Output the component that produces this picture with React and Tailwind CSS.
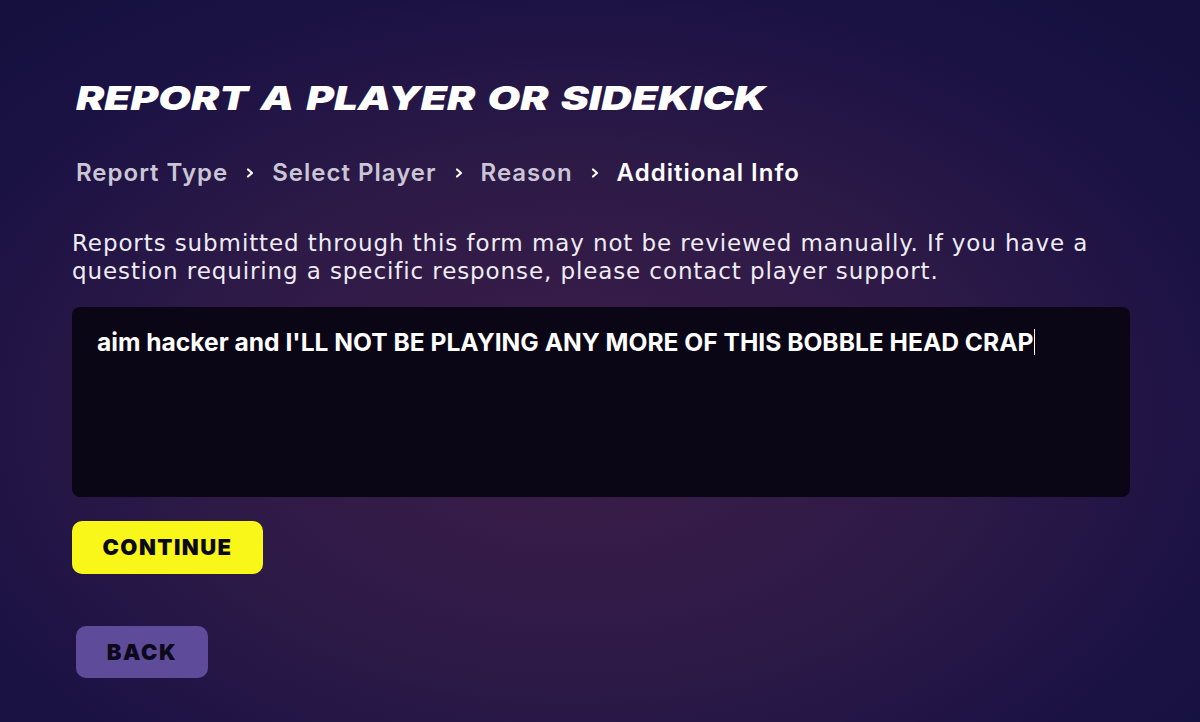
export default function App() {
  const crumbs = ["Report Type", "Select Player", "Reason"];
  return (
    <div className="w-[1200px] h-[722px] overflow-hidden bg-[radial-gradient(ellipse_70%_75%_at_48%_58%,#3d1d48_0%,#2e1a47_45%,#1b1244_80%,#15103e_100%)] font-['Inter','Noto_Sans',sans-serif] text-white">
      <div className="flex flex-col pl-[72px] pr-[70px] pt-[80px]">
        <h1 className="pl-[4px] text-[33px] leading-[36px] font-black italic text-white">
          <span className="inline-block origin-left scale-x-[1.28] whitespace-nowrap [word-spacing:3px]">REPORT A PLAYER OR SIDEKICK</span>
        </h1>
        <div className="mt-[42px] pl-[4px] flex items-center text-[24px] leading-[30px] font-semibold tracking-[1px]">
          {crumbs.map((c) => (
            <div key={c} className="flex items-center">
              <span className="text-[#cbc6d6]">{c}</span>
              <svg className="mx-[17px]" width="10" height="12" viewBox="0 0 10 12">
                <path d="M3 2.5 L7 6 L3 9.5" fill="none" stroke="#ffffff" strokeWidth="2.2" strokeLinecap="round" strokeLinejoin="round" />
              </svg>
            </div>
          ))}
          <span className="text-white">Additional Info</span>
        </div>
        <p className="mt-[41px] font-['DejaVu_Sans',sans-serif] text-[23px] leading-[28px] tracking-[0.9px] text-[#eeecf4] font-normal whitespace-nowrap">
          Reports submitted through this form may not be reviewed manually. If you have a<br />
          question requiring a specific response, please contact player support.
        </p>
        <div className="mt-[22px] h-[190px] rounded-[8px] bg-[#0b0616] px-[25px] pt-[20px]">
          <div className="flex items-center text-[24.6px] leading-[30px] font-bold text-white">
            <span>aim hacker and I'LL NOT BE PLAYING ANY MORE OF THIS BOBBLE HEAD CRAP</span>
            <span className="ml-[1px] w-[1px] h-[26px] bg-white"></span>
          </div>
        </div>
        <div className="mt-[24px]">
          <button className="w-[191px] h-[53px] rounded-[10px] bg-[#f8f719] text-[#0c0a1a] text-[22px] font-black tracking-[1.5px]">
            CONTINUE
          </button>
        </div>
        <div className="mt-[52px] pl-[4px]">
          <button className="w-[132px] h-[52px] rounded-[10px] bg-[#5e4b99] text-[#0c0a1a] text-[22px] font-black tracking-[1.5px]">
            BACK
          </button>
        </div>
      </div>
    </div>
  );
}
